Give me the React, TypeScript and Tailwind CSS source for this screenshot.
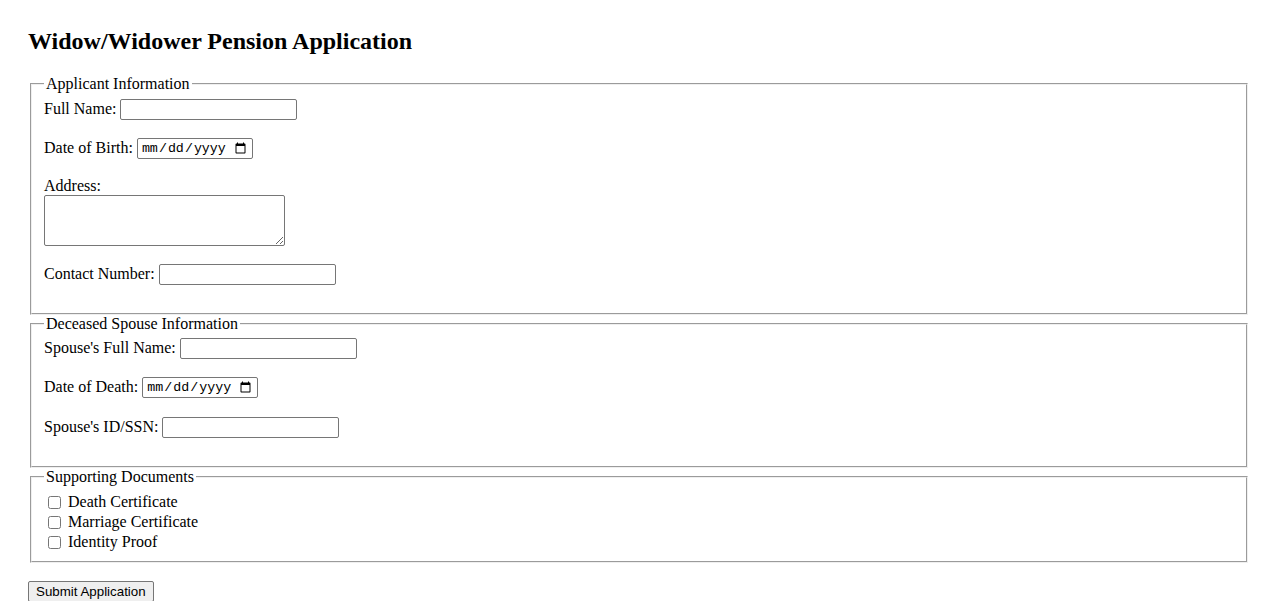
import React from "react";

const fieldsetCls =
  "mx-[2px] border-2 [border-style:groove] [border-color:ThreeDFace] px-3";
const legendCls = "px-[2px] leading-[18px]";
const textInput =
  "h-[21px] w-[177px] rounded-[2px] border border-[#767676] bg-white px-[2px] py-[1px] font-['Liberation_Sans',Arial,sans-serif] text-[13.33px]";
const dateInput =
  "h-[21px] w-[116px] rounded-[2px] border border-[#767676] bg-white pl-[3px] pr-[3px] py-[1px] font-['Liberation_Mono',monospace] text-[13.33px]";

interface RowProps {
  label: string;
  type?: string;
  className?: string;
}

const Row = ({ label, type = "text", className = "" }: RowProps) => (
  <div className={`flex h-[21px] items-center gap-[4px] ${className}`}>
    <label className="mb-[2px] leading-[18px]">{label}</label>
    <input type={type} className={type === "date" ? dateInput : textInput} />
  </div>
);

const Check = ({ label }: { label: string }) => (
  <div className="flex h-[20px] items-center">
    <input type="checkbox" className="ml-[4px] mr-[3px] h-[13px] w-[13px]" />
    <span className="ml-[4px] leading-[18px]">{label}</span>
  </div>
);

export default function App() {
  return (
    <div className="min-h-screen bg-white px-[28px] pt-[27px] font-['Liberation_Serif','Times_New_Roman',serif] text-[16px] text-black">
      <h2 className="mb-[20px] text-[24px] font-bold leading-[28px]">
        Widow/Widower Pension Application
      </h2>

      <form onSubmit={(e) => e.preventDefault()}>
        <fieldset className={`${fieldsetCls} pb-[28px]`}>
          <legend className={legendCls}>Applicant Information</legend>
          <Row label="Full Name:" className="mt-[6px]" />
          <Row label="Date of Birth:" type="date" className="mt-[18px]" />
          <label className="mt-[18px] block leading-[18px]">Address:</label>
          <textarea className="block h-[51px] w-[241px] rounded-[2px] border border-[#767676] bg-white" />
          <Row label="Contact Number:" className="mt-[18px]" />
        </fieldset>

        <fieldset className={`${fieldsetCls} pb-[28px]`}>
          <legend className={legendCls}>Deceased Spouse Information</legend>
          <Row label="Spouse's Full Name:" className="mt-[5px]" />
          <Row label="Date of Death:" type="date" className="mt-[18px]" />
          <Row label="Spouse's ID/SSN:" className="mt-[19px]" />
        </fieldset>

        <fieldset className={`${fieldsetCls} pb-[9px]`}>
          <legend className={legendCls}>Supporting Documents</legend>
          <div className="mt-[6px]">
            <Check label="Death Certificate" />
            <Check label="Marriage Certificate" />
            <Check label="Identity Proof" />
          </div>
        </fieldset>

        <button
          type="submit"
          className="mt-[18px] h-[21px] rounded-[2px] border border-[#767676] bg-[#efefef] px-[7px] py-[1px] font-['Liberation_Sans',Arial,sans-serif] text-[13.33px] leading-[15px]"
        >
          Submit Application
        </button>
      </form>
    </div>
  );
}
